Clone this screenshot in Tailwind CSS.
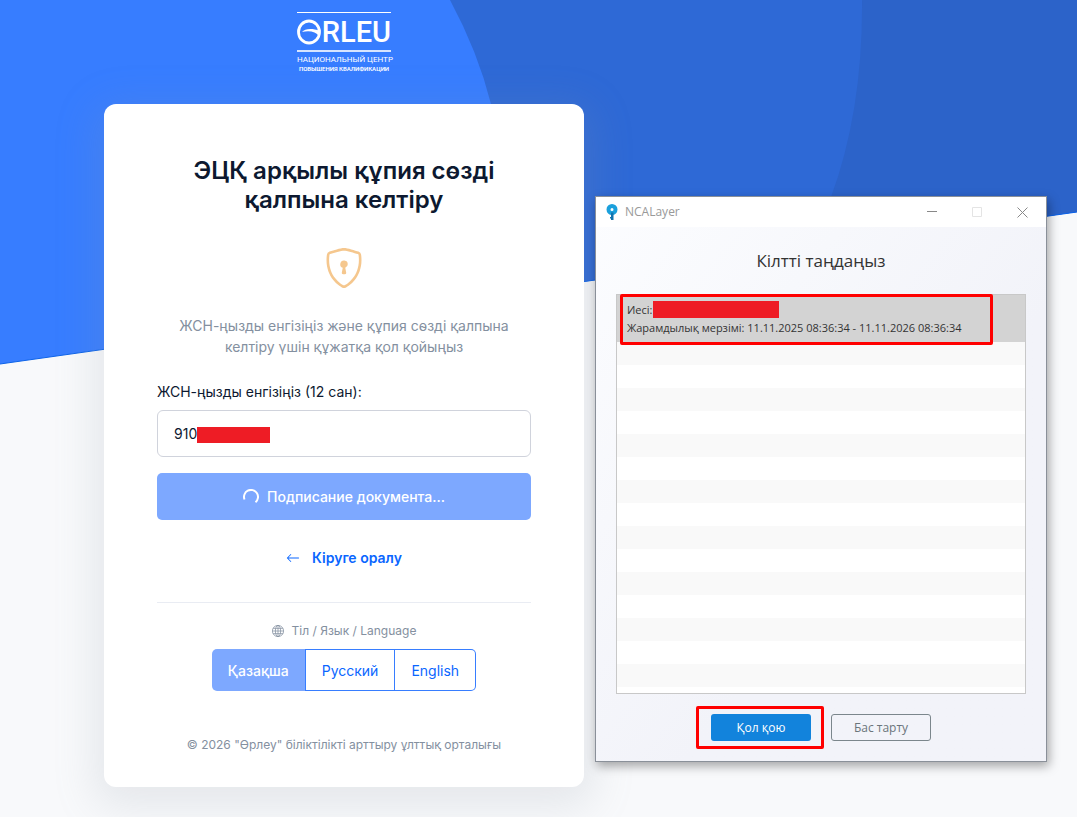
<!DOCTYPE html>
<html lang="kk">
<head>
    <meta charset="UTF-8">
    <meta name="viewport" content="width=device-width, initial-scale=1.0">
    <title>Өрлеу - Құпия сөзді қалпына келтіру</title>
    <script src="https://cdn.jsdelivr.net/npm/@tailwindcss/browser@4"></script>
</head>
<body class="relative min-h-screen bg-[#f8f9fb] font-['Inter',sans-serif] text-[#0d1930] overflow-x-hidden">
    <!-- Hero background -->
    <svg class="absolute inset-x-0 top-0 w-full h-[365px]" viewBox="0 0 1077 365" preserveAspectRatio="none" aria-hidden="true">
        <path fill="#377dff" d="M0 0H1077V212L0 364Z"/>
        <path fill="#2e69d6" d="M450 0Q478 52 491 104Q515 200 505 293L1077 212V0Z"/>
        <path fill="#2c63c9" d="M862 0Q863 110 831 197L805 250L1077 212V0Z"/>
        <path fill="none" stroke="#0d63e8" stroke-width="1" d="M0 364L1077 212"/>
    </svg>

    <main class="relative ml-[104px] w-[480px] pt-3 pb-[30px]">
        <!-- Logo -->
        <a href="#" class="mx-auto block w-[94px] text-white">
            <span class="flex items-center justify-between h-[38px] border-t border-white">
                <svg class="w-6 h-[26px] shrink-0" viewBox="0 0 24 26" fill="none" stroke="currentColor">
                    <ellipse cx="12" cy="13" rx="10.5" ry="11" stroke-width="2.8"/>
                    <path fill="currentColor" stroke="none" d="M5 13C8 9.500 15 9 23 12L22 17C19 12.500 12 11 5 13Z"/>
                </svg>
                <span class="font-['Roboto',sans-serif] text-[29px] leading-[36px] font-medium">RLEU</span>
            </span>
            <span class="block border-y border-white/80 h-[2px]"></span>
            <span class="block pt-[3px] text-center text-[8px] leading-[10px] whitespace-nowrap font-['Roboto',sans-serif]">НАЦИОНАЛЬНЫЙ ЦЕНТР</span>
            <span class="block text-center text-[6px] leading-[8px] font-semibold whitespace-nowrap font-['Roboto',sans-serif]">ПОВЫШЕНИЯ КВАЛИФИКАЦИИ</span>
        </a>

        <!-- Card -->
        <div class="mt-[31px] rounded-xl bg-white px-[53px] pt-[52px] pb-8 shadow-[0_10px_40px_10px_rgba(140,152,164,0.175)]">
            <h1 class="text-center text-[24px] leading-[29px] font-semibold">ЭЦҚ арқылы құпия сөзді қалпына келтіру</h1>

            <svg class="mx-auto mt-[34px] size-10 text-[#f5c78e]" viewBox="0 0 16 16" fill="currentColor">
                <path d="M5.338 1.59a61 61 0 0 0-2.837.856.48.48 0 0 0-.328.39c-.554 4.157.726 7.19 2.253 9.188a10.7 10.7 0 0 0 2.287 2.233c.346.244.652.42.893.533q.18.085.293.118a1 1 0 0 0 .101.025 1 1 0 0 0 .1-.025q.114-.034.294-.118c.24-.113.547-.29.893-.533a10.7 10.7 0 0 0 2.287-2.233c1.527-1.997 2.807-5.031 2.253-9.188a.48.48 0 0 0-.328-.39c-.651-.213-1.75-.56-2.837-.855C9.552 1.29 8.531 1.067 8 1.067c-.53 0-1.552.223-2.662.524zM5.072.56C6.157.265 7.31 0 8 0s1.843.265 2.928.56c1.11.3 2.229.655 2.887.87a1.54 1.54 0 0 1 1.044 1.262c.596 4.477-.787 7.795-2.465 9.99a11.8 11.8 0 0 1-2.517 2.453 7 7 0 0 1-1.048.625c-.28.132-.581.24-.829.24s-.548-.108-.829-.24a7 7 0 0 1-1.048-.625 11.8 11.8 0 0 1-2.517-2.453C1.928 10.487.545 7.169 1.141 2.692A1.54 1.54 0 0 1 2.185 1.43 63 63 0 0 1 5.072.56"/>
                <path d="M9.5 6.5a1.5 1.5 0 0 1-1 1.415l.385 1.99a.5.5 0 0 1-.491.595h-.788a.5.5 0 0 1-.49-.595l.384-1.99a1.5 1.5 0 1 1 2-1.415"/>
            </svg>

            <p class="mt-[27px] text-center text-[14px] leading-[21px] text-[#8490a0]">ЖСН-ңызды енгізіңіз және құпия сөзді қалпына келтіру үшін құжатқа қол қойыңыз</p>

            <form class="mt-6">
                <label for="iin" class="block text-[14px] leading-[21px]">ЖСН-ңызды енгізіңіз (12 сан):</label>
                <div class="relative mt-2">
                    <input id="iin" name="iin" type="text" value="910" class="block w-full h-[47px] rounded-md border border-[#d0d3dc] bg-white px-4 text-[14px]">
                    <span class="absolute left-10 top-[17px] h-4 w-[73px] bg-[#ee1c25]"></span>
                </div>
                <button type="submit" class="mt-4 flex w-full h-[47px] items-center justify-center gap-2 rounded-[5px] bg-[#7da8ff] text-[14px] font-medium text-white">
                    <svg class="size-4" viewBox="0 0 16 16" fill="none" stroke="currentColor" stroke-width="2">
                        <path d="M1.500 10.500A7 7 0 1 1 12.500 13.300"/>
                    </svg>
                    Подписание документа...
                </button>
            </form>

            <a href="#" class="mt-[27px] flex items-center justify-center gap-3 text-[14px] leading-[21px] font-semibold text-[#0a66ff]">
                <svg class="size-[14px]" viewBox="0 0 16 16" fill="currentColor">
                    <path d="M15 8a.5.5 0 0 0-.5-.5H2.707l3.147-3.146a.5.5 0 1 0-.708-.708l-4 4a.5.5 0 0 0 0 .708l4 4a.5.5 0 0 0 .708-.708L2.707 8.5H14.500A.5.5 0 0 0 15 8"/>
                </svg>
                Кіруге оралу
            </a>

            <!-- Language -->
            <div class="mt-[34px] border-t border-[#e9ecf3] pt-[18px] text-[#8490a0]">
                <div class="flex items-center justify-center gap-2 text-[12px] leading-5">
                    <svg class="size-3" viewBox="0 0 16 16" fill="none" stroke="currentColor">
                        <circle cx="8" cy="8" r="7.500"/>
                        <ellipse cx="8" cy="8" rx="3.500" ry="7.500"/>
                        <path d="M8 .5V15.500M.5 8H15.500M1.500 4.500H14.500M1.500 11.500H14.500"/>
                    </svg>
                    Тіл / Язык / Language
                </div>
                <div class="mt-2 flex justify-center text-[14px] text-[#0a66ff]">
                    <button type="button" class="h-[42px] rounded-l-[5px] bg-[#7da8ff] px-4 font-medium text-white">Қазақша</button>
                    <button type="button" class="h-[42px] border border-[#377dff] px-4">Русский</button>
                    <button type="button" class="h-[42px] rounded-r-[5px] border border-l-0 border-[#377dff] px-4">English</button>
                </div>
                <p class="mt-11 text-center text-[12px] leading-5">© 2026 "Өрлеу" біліктілікті арттыру ұлттық орталығы</p>
            </div>
        </div>
    </main>

    <!-- NCALayer window -->
    <section class="absolute left-[595px] top-[196px] w-[452px] border border-[#8a9099] bg-linear-to-br from-[#fcfdff] to-[#f2f3f9] to-60% font-['Open_Sans',sans-serif] text-[12px] text-[#333333] shadow-[2px_4px_10px_rgba(0,0,0,0.35)]">
        <header class="flex h-[30px] items-center bg-white pl-[10px] text-[#999999]">
            <svg class="h-4 w-3 mr-[7px]" viewBox="0 0 12 16" fill="none">
                <circle cx="6" cy="5.500" r="3.500" stroke="#1ba0dc" stroke-width="4"/>
                <path d="M5 8.500H7.500V16H5V14.500H4V13H5Z" fill="#1273ae"/>
            </svg>
            <span class="flex-1">NCALayer</span>
            <button type="button" aria-label="Minimize" class="flex w-[45px] h-full items-center justify-center">
                <svg class="size-[10px]" viewBox="0 0 10 10" stroke="#888888"><path d="M0 4.500H10"/></svg>
            </button>
            <button type="button" aria-label="Maximize" class="flex w-[45px] h-full items-center justify-center">
                <svg class="size-[10px]" viewBox="0 0 10 10" fill="none" stroke="#e4e4e4"><path d="M.5 .5H9.500V9.500H.5Z"/></svg>
            </button>
            <button type="button" aria-label="Close" class="flex w-[47px] h-full items-center justify-center">
                <svg class="size-[11px]" viewBox="0 0 11 11" stroke="#888888"><path d="M.5 .5L10.500 10.500M10.500 .5L.5 10.500"/></svg>
            </button>
        </header>

        <div class="px-5 pb-5">
            <h2 class="pt-[21px] text-center text-[17px] leading-[26px]">Кілтті таңдаңыз</h2>

            <div class="relative mt-5">
                <ul class="flex h-[400px] flex-col overflow-hidden border border-[#c8c8c8] bg-white">
                    <li class="h-[47px] shrink-0 bg-[#d3d3d3] pl-[10px] pt-[6px] text-[11px] leading-[18px]">
                        <div class="flex items-start gap-px">Иесі:<span class="h-[17px] w-[126px] bg-[#ee1c25]"></span></div>
                        <div>Жарамдылық мерзімі: 11.11.2025 08:36:34 - 11.11.2026 08:36:34</div>
                    </li>
                    <li class="h-[23px] shrink-0 bg-[#f9f9f9]"></li>
                    <li class="h-[23px] shrink-0"></li>
                    <li class="h-[23px] shrink-0 bg-[#f9f9f9]"></li>
                    <li class="h-[23px] shrink-0"></li>
                    <li class="h-[23px] shrink-0 bg-[#f9f9f9]"></li>
                    <li class="h-[23px] shrink-0"></li>
                    <li class="h-[23px] shrink-0 bg-[#f9f9f9]"></li>
                    <li class="h-[23px] shrink-0"></li>
                    <li class="h-[23px] shrink-0 bg-[#f9f9f9]"></li>
                    <li class="h-[23px] shrink-0"></li>
                    <li class="h-[23px] shrink-0 bg-[#f9f9f9]"></li>
                    <li class="h-[23px] shrink-0"></li>
                    <li class="h-[23px] shrink-0 bg-[#f9f9f9]"></li>
                    <li class="h-[23px] shrink-0"></li>
                    <li class="h-[23px] shrink-0 bg-[#f9f9f9]"></li>
                </ul>
                <span class="absolute left-1 top-0 h-[51px] w-[373px] rounded-[2px] border-3 border-[#ff0000]"></span>
            </div>

            <div class="mt-5 flex justify-center gap-5">
                <div class="relative">
                    <button type="button" class="block h-[27px] w-[100px] rounded-[3px] bg-[#1283dc] text-white">Қол қою</button>
                    <span class="absolute -left-[15px] -right-[13px] -inset-y-2 rounded-[2px] border-3 border-[#ff0000]"></span>
                </div>
                <button type="button" class="h-[27px] w-[100px] rounded-[3px] border border-[#7b868c] text-[#6b757b]">Бас тарту</button>
            </div>
        </div>
    </section>
</body>
</html>
